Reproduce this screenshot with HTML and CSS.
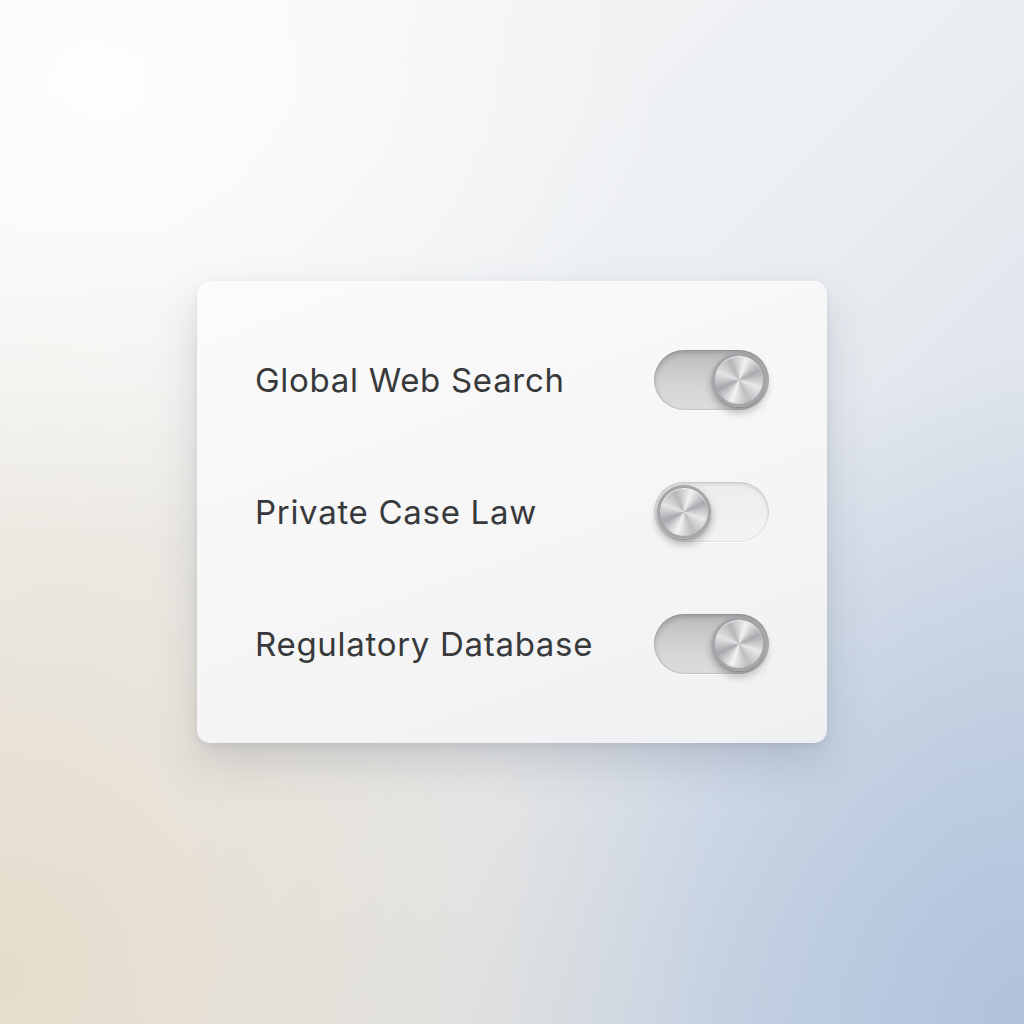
FILE: index.html
```html
<!DOCTYPE html>
<html lang="en">
<head>
  <meta charset="UTF-8">
  <meta name="viewport" content="width=device-width, initial-scale=1.0">
  <title>Sources</title>
  <link rel="stylesheet" href="styles.css">
</head>
<body>
  <div class="panel">
    <div class="row">
      <span class="label">Global Web Search</span>
      <div class="switch on"><div class="knob"></div></div>
    </div>
    <div class="row">
      <span class="label">Private Case Law</span>
      <div class="switch"><div class="knob"></div></div>
    </div>
    <div class="row">
      <span class="label">Regulatory Database</span>
      <div class="switch on"><div class="knob"></div></div>
    </div>
  </div>
</body>
</html>
```

FILE: styles.css
```css
body {
  margin: 0;
  width: 1024px;
  height: 1024px;
  display: flex;
  justify-content: center;
  align-items: center;
  font-family: 'Inter', 'Liberation Sans', sans-serif;
  background:
    radial-gradient(ellipse 55% 45% at 10% 8%, rgba(253,253,252,1) 0%, rgba(253,253,252,0) 100%),
    radial-gradient(ellipse 70% 75% at 0% 95%, #e6dccb 0%, rgba(230,220,203,0) 100%),
    radial-gradient(ellipse 55% 65% at 100% 100%, #b0c2dc 0%, rgba(176,194,220,0) 100%),
    linear-gradient(135deg, #f8f8f6 0%, #ebeef2 50%, #cdd6e2 100%);
}
.panel {
  width: 628px;
  height: 460px;
  box-sizing: border-box;
  padding: 68px 57px;
  background: linear-gradient(160deg, #fbfbfb 0%, #f5f5f6 60%, #eff0f2 100%);
  border-radius: 12px;
  box-shadow: 0 0 0 1px rgba(255,255,255,0.8), 0 20px 44px rgba(80,90,110,0.22), 0 3px 8px rgba(0,0,0,0.08);
  display: flex;
  flex-direction: column;
  justify-content: space-between;
}
.row {
  height: 60px;
  display: flex;
  align-items: center;
  justify-content: space-between;
}
.label {
  font-size: 33px;
  color: #38393b;
  letter-spacing: 0.7px;
}
.switch {
  width: 115px;
  height: 60px;
  box-sizing: border-box;
  border-radius: 30px;
  background: linear-gradient(180deg, #ebecec 0%, #f3f4f4 100%);
  box-shadow: inset 0 2px 4px rgba(0,0,0,0.12), inset 0 0 0 1px rgba(0,0,0,0.06), 0 1px 0 rgba(255,255,255,0.9);
  display: flex;
  align-items: center;
  padding: 0 3px;
}
.switch.on {
  background: linear-gradient(180deg, #bbbcbd 0%, #d4d5d6 60%, #dcdddd 100%);
  box-shadow: inset 0 3px 6px rgba(0,0,0,0.2), inset 0 0 0 1px rgba(0,0,0,0.08), 0 1px 0 rgba(255,255,255,0.9);
  justify-content: flex-end;
}
.knob {
  width: 54px;
  height: 54px;
  border-radius: 50%;
  box-sizing: border-box;
  border: 3px solid #a4a5a8;
  background:
    radial-gradient(circle, rgba(255,255,255,0) 60%, rgba(120,120,125,0.25) 100%),
    conic-gradient(from 20deg, #f2f2f3, #a9aaad 45deg, #e9e9ea 90deg, #bcbdbf 135deg, #f4f4f5 180deg, #a7a8ab 225deg, #e4e4e6 270deg, #b6b7b9 315deg, #f2f2f3);
  box-shadow: 0 5px 8px rgba(0,0,0,0.3), 0 1px 2px rgba(0,0,0,0.22), inset 0 1px 1px rgba(255,255,255,0.8);
}
```
